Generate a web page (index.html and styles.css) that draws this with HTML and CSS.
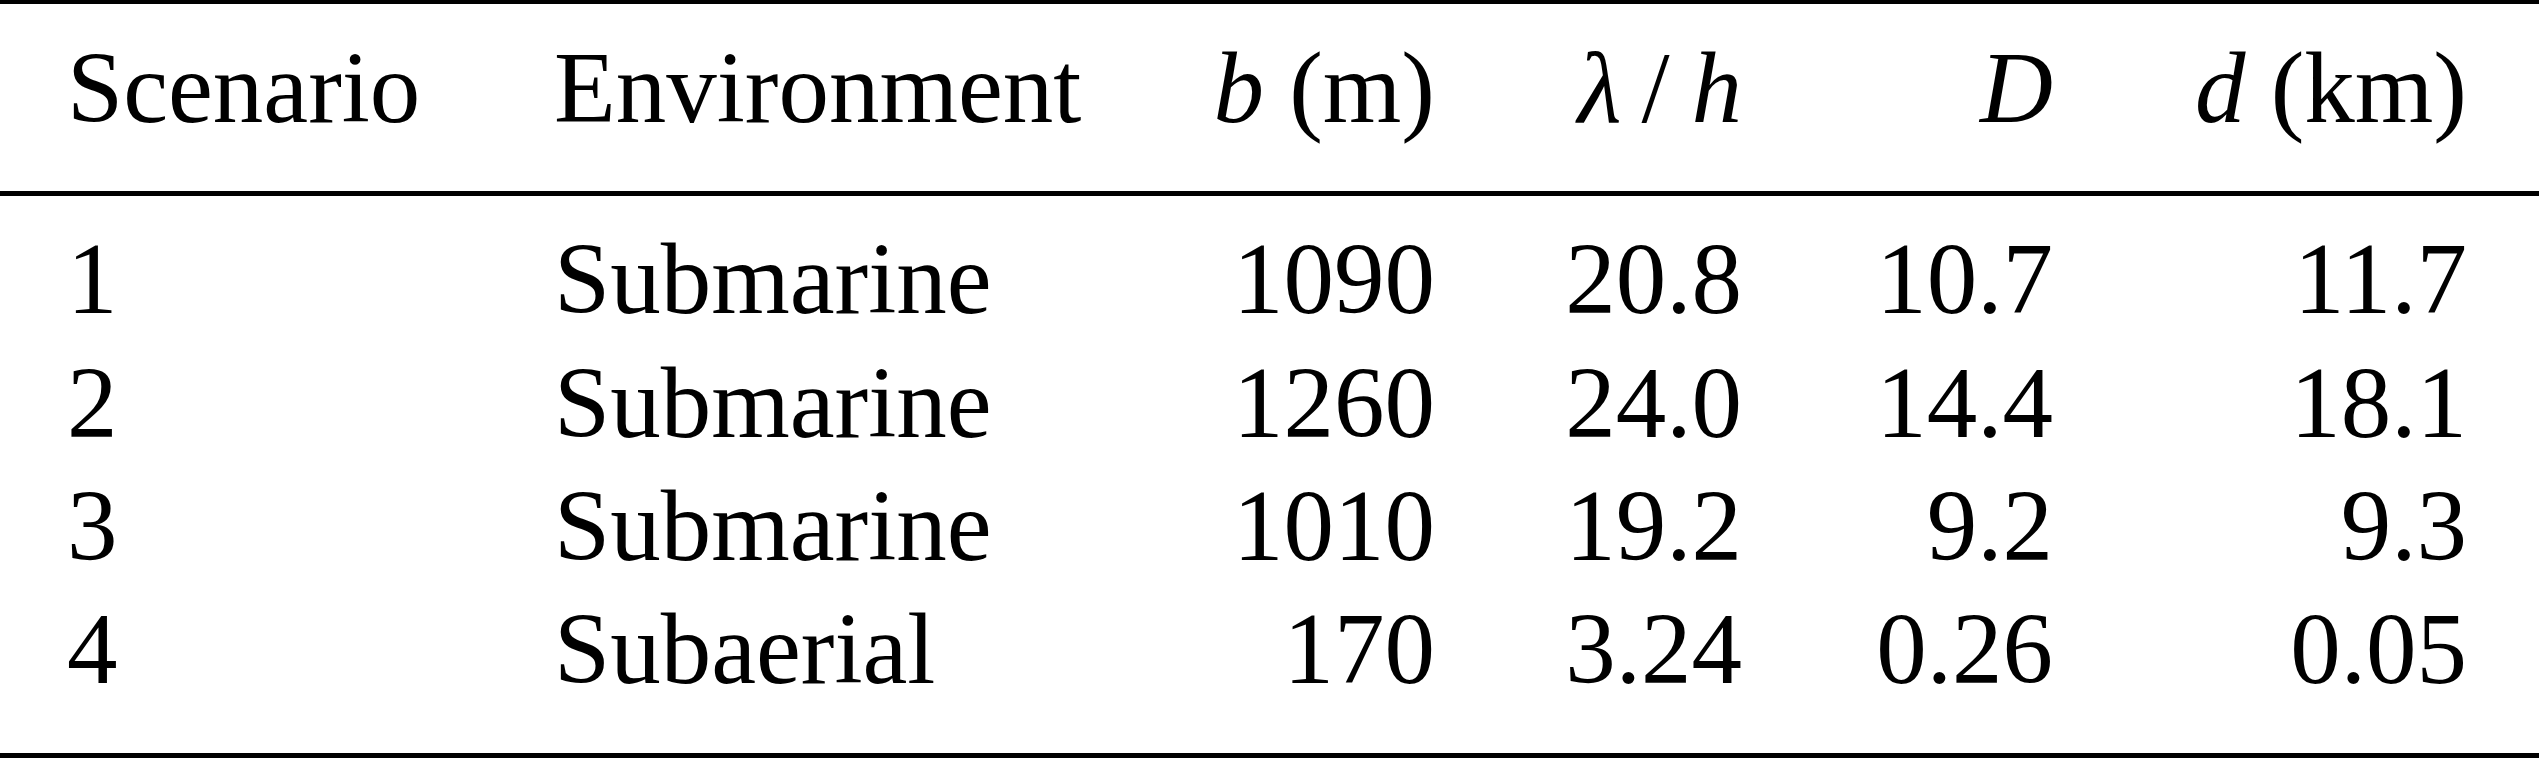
FILE: index.html
```html
<!DOCTYPE html>
<html lang="en">
<head>
    <meta charset="UTF-8">
    <meta name="viewport" content="width=device-width, initial-scale=1.0">
    <title>Scenarios</title>
    <link rel="stylesheet" href="styles.css">
</head>
<body>
    <table class="scenarios">
        <colgroup>
            <col class="col_scenario">
            <col class="col_env">
            <col class="col_b">
            <col class="col_ratio">
            <col class="col_big_d">
            <col class="col_small_d">
        </colgroup>
        <thead>
            <tr>
                <th class="left first">Scenario</th>
                <th class="left">Environment</th>
                <th><i>b</i> (m)</th>
                <th><i>λ</i><span class="slash">/</span><i>h</i></th>
                <th><i>D</i></th>
                <th class="last"><i>d</i> (km)</th>
            </tr>
        </thead>
        <tbody>
            <tr>
                <td class="left first">1</td>
                <td class="left">Submarine</td>
                <td>1090</td>
                <td>20.8</td>
                <td>10.7</td>
                <td class="last">11.7</td>
            </tr>
            <tr>
                <td class="left first">2</td>
                <td class="left">Submarine</td>
                <td>1260</td>
                <td>24.0</td>
                <td>14.4</td>
                <td class="last">18.1</td>
            </tr>
            <tr>
                <td class="left first">3</td>
                <td class="left">Submarine</td>
                <td>1010</td>
                <td>19.2</td>
                <td>9.2</td>
                <td class="last">9.3</td>
            </tr>
            <tr>
                <td class="left first">4</td>
                <td class="left">Subaerial</td>
                <td>170</td>
                <td>3.24</td>
                <td>0.26</td>
                <td class="last">0.05</td>
            </tr>
        </tbody>
    </table>
</body>
</html>
```

FILE: styles.css
```css
html, body {
    margin: 0;
    padding: 0;
    background-color: #ffffff;
}
.scenarios {
    width: 100%;
    table-layout: fixed;
    border-collapse: separate;
    border-spacing: 0;
    font-family: "Liberation Serif", "Times New Roman", serif;
    font-size: 101px;
    line-height: 123.3px;
    color: #000000;
}
.col_scenario {
    width: 554px;
}
.col_env {
    width: 546px;
}
.col_b {
    width: 335px;
}
.col_ratio {
    width: 307px;
}
.col_big_d {
    width: 311px;
}
.col_small_d {
    width: 486px;
}
th, td {
    padding: 0;
    font-weight: normal;
    text-align: right;
    white-space: nowrap;
}
.left {
    text-align: left;
}
.first {
    padding-left: 67px;
}
.last {
    padding-right: 72px;
}
.slash {
    margin: 0 22px 0 20px;
}
thead th {
    border-top: 4px solid #000;
    border-bottom: 5px solid #000;
    padding-top: 23px;
    padding-bottom: 41px;
}
tbody tr:first-child td {
    padding-top: 22px;
}
tbody tr:last-child td {
    padding-bottom: 42px;
    border-bottom: 5px solid #000;
}
```
